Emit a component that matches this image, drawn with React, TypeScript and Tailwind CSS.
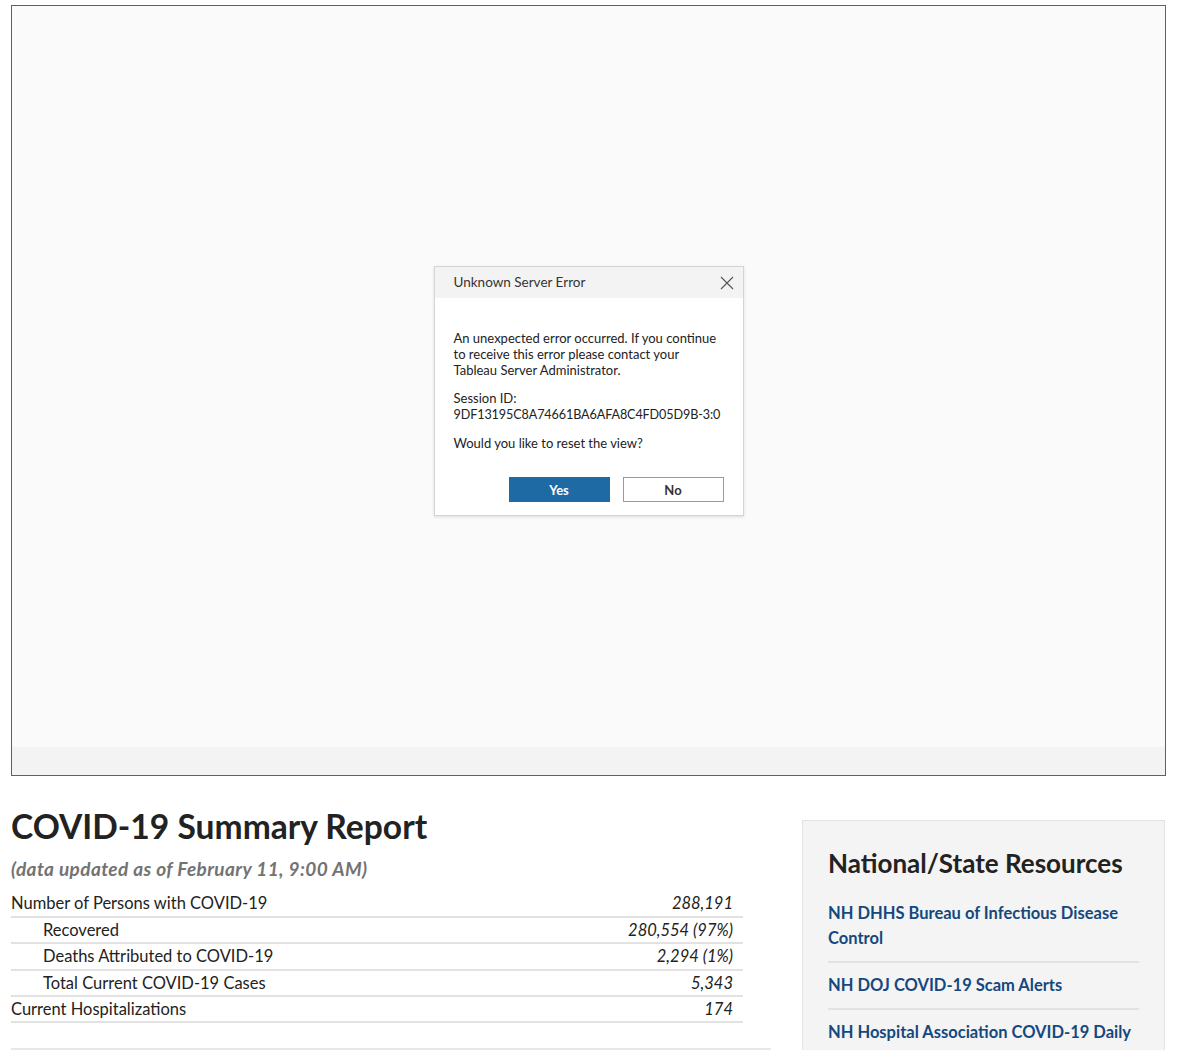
import * as React from "react"

const rows = [
  { label: "Number of Persons with COVID-19", value: "288,191", indent: false },
  { label: "Recovered", value: "280,554 (97%)", indent: true },
  { label: "Deaths Attributed to COVID-19", value: "2,294 (1%)", indent: true },
  { label: "Total Current COVID-19 Cases", value: "5,343", indent: true },
  { label: "Current Hospitalizations", value: "174", indent: false },
]

const links = [
  "NH DHHS Bureau of Infectious Disease Control",
  "NH DOJ COVID-19 Scam Alerts",
  "NH Hospital Association COVID-19 Daily Report",
]

function ErrorDialog() {
  return (
    <div className="w-[310px] border border-[#d4d4d4] bg-white shadow-[0_1px_3px_rgba(0,0,0,0.12)] font-['Lato',sans-serif] text-[#222]">
      <div className="flex h-[31px] items-center justify-between bg-[#f3f3f3] pl-[19px] pr-[9px]">
        <span className="text-[13.5px] text-[#333]">Unknown Server Error</span>
        <svg width="14" height="14" viewBox="0 0 14 14" className="stroke-[#555]">
          <path d="M1 1 L13 13 M13 1 L1 13" strokeWidth="1.1" fill="none" />
        </svg>
      </div>
      <div className="px-[19px] pt-[32px] pb-[13px] text-[13px] leading-[16px]">
        <p>An unexpected error occurred. If you continue to receive this error please contact your Tableau Server Administrator.</p>
        <p className="mt-[12px]">
          Session ID:<br />
          <span className="whitespace-nowrap text-[12.6px] tracking-[-0.1px]">9DF13195C8A74661BA6AFA8C4FD05D9B-3:0</span>
        </p>
        <p className="mt-[12px]">Would you like to reset the view?</p>
        <div className="mt-[26px] flex justify-end gap-[13px]">
          <button className="h-[25px] w-[101px] bg-[#1d6aa5] text-[13px] font-bold text-white">Yes</button>
          <button className="h-[25px] w-[101px] border border-[#9a9a9a] bg-white text-[13px] font-bold text-[#333]">No</button>
        </div>
      </div>
    </div>
  )
}

export default function App() {
  return (
    <div className="h-[1050px] w-[1200px] overflow-hidden bg-white font-['Lato',sans-serif] text-[#222]">
      <div className="px-[11px] pt-[5px]">
        <div className="flex h-[771px] w-[1155px] flex-col border border-[#3f63a3] bg-[#fafafa]">
          <div className="flex flex-1 items-start justify-center pt-[260px]">
            <ErrorDialog />
          </div>
          <div className="h-[28px] bg-[#f3f3f3]" />
        </div>
      </div>

      <div className="mt-[30px] flex gap-[31px] pl-[11px]">
        <div className="w-[760px]">
          <h1 className="text-[33.6px] font-bold leading-[40px] text-[#222]">COVID-19 Summary Report</h1>
          <p className="mt-[9px] text-[19px] font-bold italic tracking-[0.4px] text-[#737373]">(data updated as of February 11, 9:00 AM)</p>
          <div className="mt-[8px] w-[732px]">
            {rows.map((r) => (
              <div key={r.label} className="flex h-[26.4px] items-center justify-between border-b-2 border-[#e2e2e2] pr-[10px] text-[16.5px]">
                <span className={r.indent ? "pl-[32px]" : ""}>{r.label}</span>
                <span className="italic">{r.value}</span>
              </div>
            ))}
          </div>
          <div className="mt-[25px] border-b-2 border-[#e8e8e8]" />
        </div>

        <div className="mt-[14px] h-[260px] w-[363px] shrink-0 border border-[#e3e3e3] bg-[#f4f4f4] px-[25px] pt-[26px]">
          <h2 className="text-[26px] font-bold leading-[32px] text-[#222]">National/State Resources</h2>
          <div className="mt-[12px]">
            {links.map((l, i) => (
              <div key={l} className={i < links.length - 1 ? "border-b-2 border-[#e2e2e2] py-[10px]" : "py-[10px]"}>
                <a className="text-[16.5px] font-bold leading-[25px] text-[#14487e]">{l}</a>
              </div>
            ))}
          </div>
        </div>
      </div>
    </div>
  )
}
